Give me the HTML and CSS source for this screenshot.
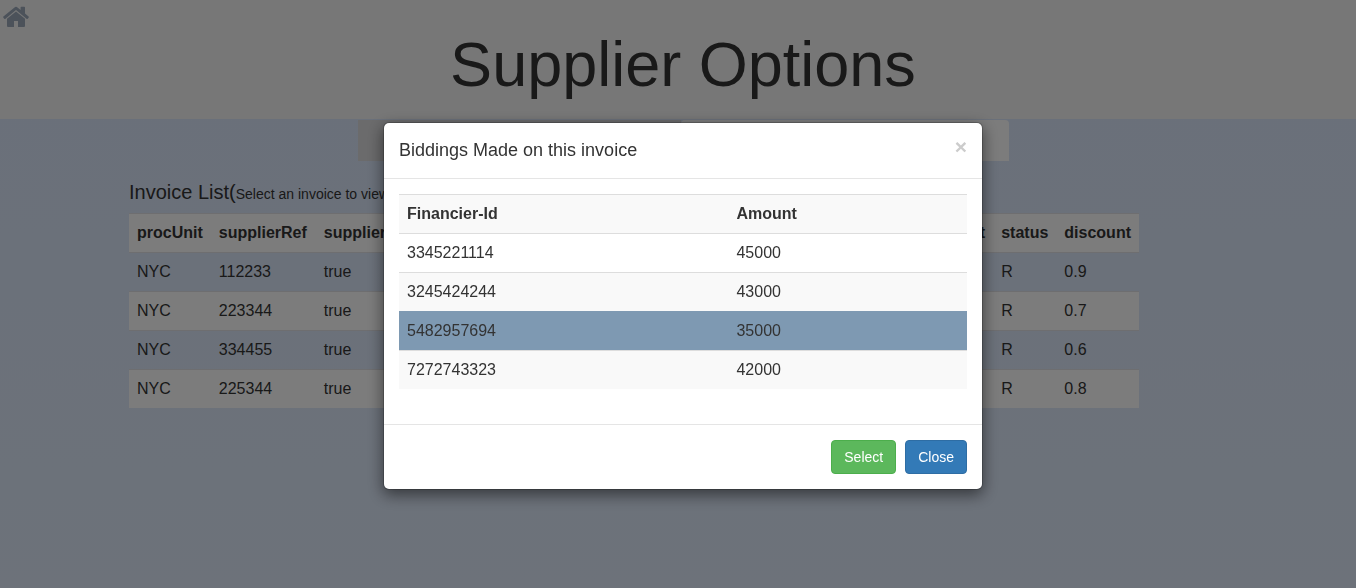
FILE: index.html
```html
<!DOCTYPE html>
<html lang="en">
<head>
<meta charset="utf-8">
<title>Supplier Options</title>
<link rel="stylesheet" href="styles.css">
</head>
<body>
<header class="masthead">
  <a class="home" href="#" aria-label="Home">
    <svg width="26" height="22" viewBox="0 0 26 22" fill="currentColor"><path d="M13 5.500 4 12.800V20q0 1 1 1h6v-6h4v6h6q1 0 1-1v-7.200z"/><path d="M25.600 10.600 22 7.600V1.500q0-.7-.7-.7h-3q-.7 0-.7.700v2.600L14.500 1.400q-1.500-1.200-3 0L.4 10.600q-.5.500-.1 1l1 1.200q.4.400.9.100L13 4.100l10.800 8.800q.5.300.9-.1l1-1.200q.400-.5-.1-1z"/></svg>
  </a>
  <h1 class="masthead-title">Supplier Options</h1>
</header>
<main class="page">
  <nav class="tabs">
    <a class="tab tab-muted" href="#" aria-label="Create invoice"></a>
    <a class="tab" href="#" aria-label="View invoices"></a>
  </nav>
  <section class="invoices">
    <h2 class="list-title">Invoice List(<small>Select an invoice to view</small></h2>
    <table class="grid invoice-grid">
      <tr><th>procUnit</th><th class="ref">supplierRef</th><th>supplierAccept</th><th class="wide"></th><th>amount</th><th>status</th><th>discount</th></tr>
      <tr><td>NYC</td><td>112233</td><td>true</td><td></td><td></td><td>R</td><td>0.9</td></tr>
      <tr><td>NYC</td><td>223344</td><td>true</td><td></td><td></td><td>R</td><td>0.7</td></tr>
      <tr><td>NYC</td><td>334455</td><td>true</td><td></td><td></td><td>R</td><td>0.6</td></tr>
      <tr><td>NYC</td><td>225344</td><td>true</td><td></td><td></td><td>R</td><td>0.8</td></tr>
    </table>
  </section>
</main>
<div class="overlay">
  <div class="dialog" role="dialog" aria-modal="true" aria-labelledby="dialog-title">
    <div class="dialog-head">
      <h4 class="dialog-title" id="dialog-title">Biddings Made on this invoice</h4>
      <button class="dismiss" type="button" aria-label="Dismiss">×</button>
    </div>
    <div class="dialog-body">
      <table class="grid bid-grid">
        <tr><th class="financier">Financier-Id</th><th>Amount</th></tr>
        <tr><td>3345221114</td><td>45000</td></tr>
        <tr><td>3245424244</td><td>43000</td></tr>
        <tr class="selected"><td>5482957694</td><td>35000</td></tr>
        <tr><td>7272743323</td><td>42000</td></tr>
      </table>
    </div>
    <div class="dialog-foot">
      <button class="btn btn-select" type="button">Select</button>
      <button class="btn btn-close" type="button">Close</button>
    </div>
  </div>
</div>
</body>
</html>
```
FILE: styles.css
```css
* { box-sizing: border-box; }
body {
  margin: 0;
  min-height: 100vh;
  font: 14px/20px "Liberation Sans", Arial, sans-serif;
  color: #333;
  background: linear-gradient(#d4e0f4, #dae5f5);
}
.masthead {
  position: relative;
  padding: 30px 0 20px 10px;
  background: #eee;
  text-align: center;
}
.home {
  position: absolute;
  top: 6px;
  left: 3px;
  color: #98a4b5;
}
.home svg { display: block; }
.masthead-title {
  margin: 0;
  font-size: 63px;
  font-weight: 400;
  line-height: 69px;
}
.page { padding: 1px 0 40px 10px; }
.tabs {
  display: flex;
  width: 651px;
  margin: 0 auto;
}
.tab {
  flex: 1;
  height: 41px;
  border-radius: 4px 4px 0 0;
  background: #f9f9f9;
}
.tab-muted {
  flex: 0 0 323px;
  border-radius: 0;
  background: #d6d6d8;
}
.invoices {
  padding: 20px 119px 0;
}
.list-title {
  margin: 0 0 8px;
  font-size: 20px;
  font-weight: 400;
  line-height: 22px;
}
.list-title small { font-size: 14px; }
.grid {
  border-collapse: collapse;
  font-size: 16px;
  line-height: 22px;
}
.grid th,
.grid td {
  height: 39px;
  padding: 8px;
  border-top: 1px solid #ddd;
  text-align: left;
}
.grid tr:nth-child(odd) { background: #f9f9f9; }
.grid tr:last-child td { height: 38px; padding-bottom: 7px; }
.invoice-grid { width: 1010px; }
.invoice-grid th,
.invoice-grid td { border-top-color: #dcdce0; }
.ref { min-width: 105px; }
.wide { width: 100%; }
.overlay {
  position: fixed;
  inset: 0;
  padding: 122px 0 30px 10px;
  background: rgba(0, 0, 0, .5);
}
.dialog {
  width: 600px;
  margin: 0 auto;
  border: 1px solid rgba(0, 0, 0, .2);
  border-radius: 6px;
  background: #fff;
  background-clip: padding-box;
  box-shadow: 0 5px 15px rgba(0, 0, 0, .5);
}
.dialog-head {
  display: flex;
  justify-content: space-between;
  align-items: flex-start;
  padding: 15px;
  border-bottom: 1px solid #e5e5e5;
}
.dialog-title {
  margin: 0;
  font-size: 18px;
  font-weight: 400;
  line-height: 25px;
}
.dismiss {
  padding: 0;
  border: 0;
  background: none;
  color: #ccc;
  font: bold 21px/18px "Liberation Sans", Arial, sans-serif;
}
.dialog-body { padding: 15px 15px 35px; }
.bid-grid { width: 100%; }
.financier { width: 58%; }
.grid .selected { background: #7e99b2; }
.grid .selected td { border-top-color: #7e99b2; }
.dialog-foot {
  display: flex;
  justify-content: flex-end;
  gap: 9px;
  padding: 15px;
  border-top: 1px solid #e5e5e5;
}
.btn {
  padding: 6px 12px;
  border: 1px solid;
  border-radius: 4px;
  color: #fff;
  font: 14px/20px "Liberation Sans", Arial, sans-serif;
}
.btn-select { background: #5cb85c; border-color: #4cae4c; }
.btn-close { background: #337ab7; border-color: #2e6da4; }
```
